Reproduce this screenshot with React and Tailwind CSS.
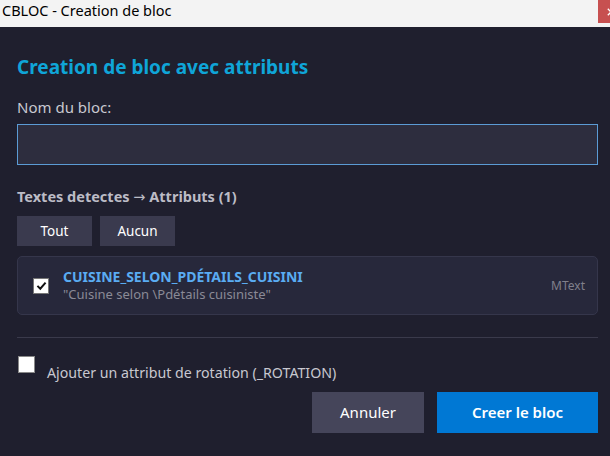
import React from "react";

const font = { fontFamily: '"Noto Sans", "Open Sans", sans-serif' };

function CheckMark() {
  return (
    <svg viewBox="0 0 16 16" className="h-[13px] w-[13px]">
      <path d="M3 8.5 L6.5 12 L13 4.5" fill="none" stroke="#111" strokeWidth="2.4" />
    </svg>
  );
}

export default function App() {
  return (
    <div className="flex h-[456px] w-[610px] flex-col overflow-hidden bg-[#1f1f2e]" style={font}>
      {/* window title bar */}
      <div className="flex h-[27px] shrink-0 items-start justify-between bg-[#f3f3f3]">
        <span className="pl-[2px] text-[14.5px] leading-[20px] text-black">CBLOC - Creation de bloc</span>
        <div className="flex h-[23px] w-[12px] items-center overflow-hidden bg-[#c75050] pl-[9px]">
          <svg viewBox="0 0 10 10" className="h-[8px] w-[8px] shrink-0">
            <path d="M1 1 L9 9 M9 1 L1 9" stroke="#fff" strokeWidth="1.6" />
          </svg>
        </div>
      </div>

      <div className="flex flex-1 flex-col px-[17px] pr-[12px]">
        <h1 className="mt-[28px] text-[19px] font-bold leading-[24px] text-[#0fa5d8]">
          Creation de bloc avec attributs
        </h1>

        <label className="mt-[18px] text-[15px] leading-[20px] text-[#c8c8d0]">Nom du bloc:</label>
        <div className="mt-[7px] h-[41px] border border-[#5b9bd5] bg-[#2d2d3e]" />

        <div className="mt-[22px] h-[19px] text-[14.5px] font-bold leading-[19px] text-[#bcbcc6]">
          Textes detectes{" "}
          <span className="font-normal leading-[10px]" style={{ fontFamily: '"DejaVu Sans", sans-serif' }}>→</span>{" "}
          Attributs (1)
        </div>

        <div className="mt-[10px] flex gap-[8px]">
          <button className="h-[30px] w-[75px] bg-[#3a3a4e] text-[13.5px] text-white">Tout</button>
          <button className="h-[30px] w-[75px] bg-[#3a3a4e] text-[13.5px] text-white">Aucun</button>
        </div>

        <div className="mt-[10px] flex h-[59px] items-center rounded-[5px] border border-[#35364b] bg-[#27283b] pl-[15px] pr-[12px]">
          <div className="flex h-[16px] w-[16px] items-center justify-center border border-[#777] bg-white">
            <CheckMark />
          </div>
          <div className="ml-[14px] flex flex-1 flex-col">
            <span className="text-[14px] font-bold leading-[18px] text-[#5aacf2]">CUISINE_SELON_PDÉTAILS_CUISINI</span>
            <span className="text-[13px] leading-[17px] text-[#8a8a96]">"Cuisine selon \Pdétails cuisiniste"</span>
          </div>
          <span className="text-[12px] text-[#80808c]">MText</span>
        </div>

        <div className="mt-[22px] h-px bg-[#3a3a4b]" />

        <div className="mt-[18px] flex items-start">
          <div className="ml-px h-[17px] w-[17px] border border-[#888] bg-white" />
          <span className="ml-[12px] mt-[7px] text-[14.2px] leading-[19px] text-[#c8c8d0]">
            Ajouter un attribut de rotation (_ROTATION)
          </span>
        </div>

        <div className="mt-[10px] flex justify-end gap-[13px]">
          <button className="h-[41px] w-[112px] bg-[#45455a] text-[15px] text-white">Annuler</button>
          <button className="h-[41px] w-[161px] bg-[#0078d4] text-[15px] font-semibold text-white">Creer le bloc</button>
        </div>
      </div>
    </div>
  );
}
